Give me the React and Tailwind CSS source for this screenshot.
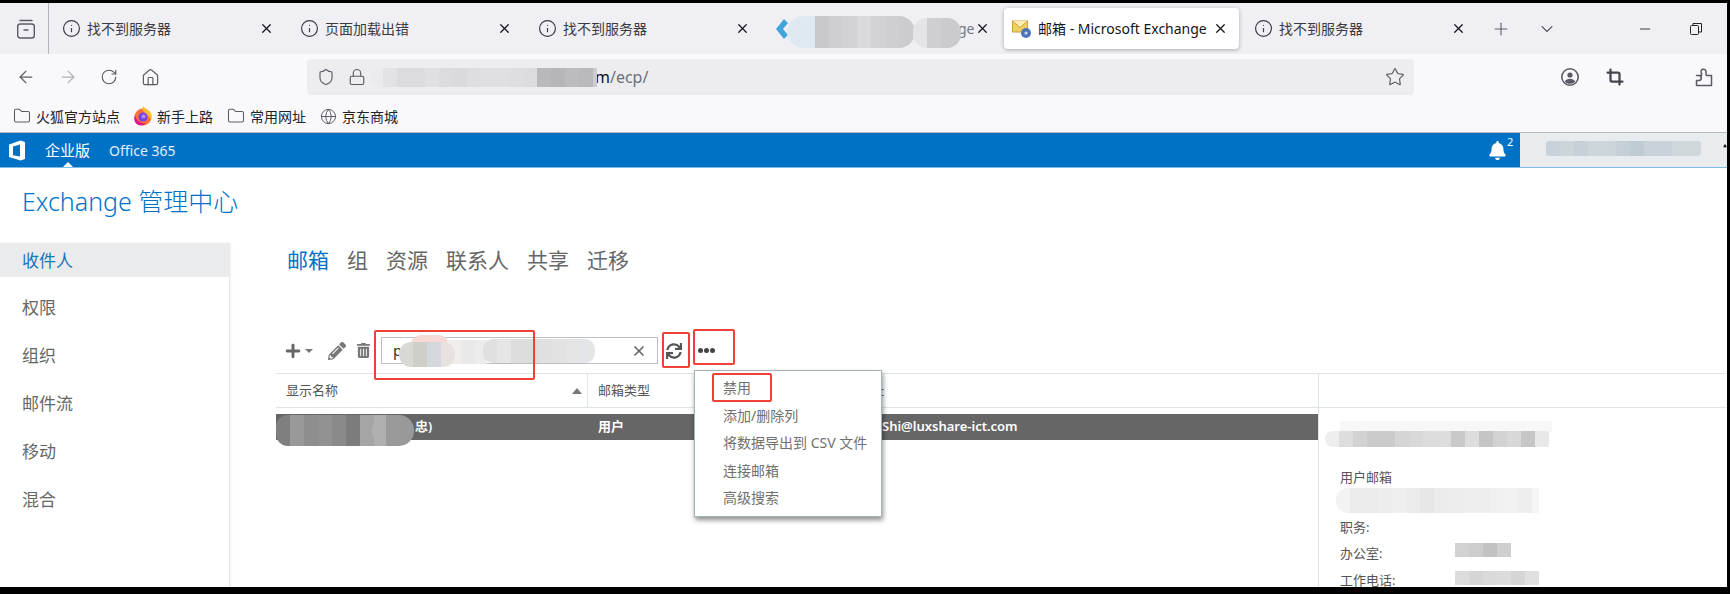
import React from "react";
import {
  ArrowLeft,
  ArrowRight,
  ChevronDown,
  Crop,
  Folder,
  Globe,
  House,
  Info,
  Lock,
  Minus,
  Plus,
  RotateCw,
  Shield,
  Star,
  X,
} from "lucide-react";
import { FaBell, FaPencilAlt, FaSync, FaTrashAlt } from "react-icons/fa";

const sansFont = "font-['Noto_Sans','Noto_Sans_CJK_SC',sans-serif]";

const sideItems = ["权限", "组织", "邮件流", "移动", "混合"];
const navItems = ["组", "资源", "联系人", "共享", "迁移"];
const menuItems = ["禁用", "添加/删除列", "将数据导出到 CSV 文件", "连接邮箱", "高级搜索"];
const bookmarks = [
  { label: "火狐官方站点", icon: "folder" },
  { label: "新手上路", icon: "firefox" },
  { label: "常用网址", icon: "folder" },
  { label: "京东商城", icon: "globe" },
];

const TabsIcon = () => (
  <svg width="20" height="22" viewBox="0 0 20 22" fill="none" stroke="#5b5b66" strokeWidth="1.4">
    <path d="M4 2.5h12" strokeLinecap="round" />
    <rect x="1.7" y="6" width="16.6" height="14" rx="2.5" />
    <path d="M8 12h4" strokeLinecap="round" />
  </svg>
);

const OfficeLogo = () => (
  <svg width="20" height="21" viewBox="0 0 20 21">
    <path d="M1 4.5 12.5 0.5 17 2v17l-4.5 1.5L1 17V4.5Z" fill="#fff" />
    <path d="M5 6.5 12 4.5v12l-7-1.2V6.5Z" fill="#0072c6" />
  </svg>
);

const MailIcon = () => (
  <svg width="20" height="20" viewBox="0 0 20 20">
    <rect x="0.5" y="2" width="15" height="11" fill="#f0cf62" stroke="#c9a23f" />
    <path d="M0.5 2 8 8.5 15.5 2" fill="#fbeeb0" stroke="#c9a23f" />
    <circle cx="14" cy="14" r="5" fill="#5272b8" />
    <circle cx="14" cy="14" r="1.6" fill="#c8d6f0" />
  </svg>
);

const FirefoxIcon = () => (
  <svg width="18" height="20" viewBox="0 0 18 20">
    <circle cx="9" cy="11" r="8.5" fill="#ff7139" />
    <path d="M9 0c2 2.5 6 4 8 8 1 2 .5 4-1 5-1-3-3-5-5-6-2-1.500-2.500-4-2-7Z" fill="#ffbd2e" />
    <path d="M1 9c1 5 5 9 11 8.500-3 3-9 2.500-11-1.500-1-2-1-5 0-7Z" fill="#e31587" />
    <circle cx="9" cy="11" r="4.500" fill="#7542e5" />
    <circle cx="9.500" cy="10.500" r="2" fill="#b98be8" />
  </svg>
);

const ProfileIcon = () => (
  <svg width="20" height="20" viewBox="0 0 20 20" fill="none" stroke="#5b5b66" strokeWidth="1.6">
    <circle cx="10" cy="10" r="8.2" />
    <circle cx="10" cy="8" r="2.6" fill="#5b5b66" stroke="none" />
    <path d="M4.800 14.500c1-2 3-2.800 5.200-2.800s4.200.8 5.200 2.800c-1.300 1.500-3.200 2.300-5.200 2.300s-3.900-.8-5.200-2.300Z" fill="#5b5b66" stroke="none" />
  </svg>
);

const DiamondIcon = () => (
  <svg width="16" height="22" viewBox="0 0 16 22">
    <path d="M9 1 1 11l8 10 4-4-5-6 5-6-4-4Z" fill="#41a5dc" />
  </svg>
);

const ExtensionIcon = () => (
  <svg width="18" height="20" viewBox="0 0 18 20" fill="none" stroke="#5b5b66" strokeWidth="1.5" strokeLinejoin="round">
    <path d="M1.500 8.500h5V6.200a2.500 2.500 0 1 1 4.500-1.400V7l.5 1.500h5v10h-15v-5h2.300a2 2 0 0 0 0-5H1.500Z" />
  </svg>
);

const Tab = ({ title }) => (
  <div className="flex h-full w-[238px] shrink-0 items-center pl-[8px] pr-[18px]">
    <Info className="h-[19px] w-[19px] shrink-0 text-[#3c3c44]" strokeWidth={1.5} />
    <span className="ml-[6px] flex-1 text-[14px] text-[#3a3a42]">{title}</span>
    <X className="h-[15px] w-[15px] text-[#15141a]" strokeWidth={2} />
  </div>
);

// pixelated patches covering redacted parts of the screenshot
const Patch = ({ className, cells }) => (
  <div className={`absolute flex overflow-hidden ${className}`}>
    {cells.map((c, i) => (
      <div key={i} className={`h-full w-[14px] shrink-0 ${c}`} />
    ))}
  </div>
);

const RedBox = ({ className }) => (
  <div className={`absolute rounded-[2px] border-[2px] border-[#ef4136] ${className}`} />
);

export default function App() {
  return (
    <div className={`relative h-[594px] w-[1730px] overflow-hidden bg-black pb-[7px] pr-[3px] pt-[3px] ${sansFont}`}>
      <div className="flex h-full flex-col overflow-hidden bg-white">
        {/* tab strip */}
        <div className="flex h-[51px] shrink-0 items-center bg-[#f0f0f4]">
          <div className="flex h-full w-[49px] shrink-0 items-center justify-center border-r border-[#b5b5bb] pl-[3px]">
            <TabsIcon />
          </div>
          <div className="w-[5px] shrink-0" />
          <Tab title="找不到服务器" />
          <Tab title="页面加载出错" />
          <Tab title="找不到服务器" />
          <div className="flex h-full w-[236px] shrink-0 items-center pl-[7px] pr-[14px]">
            <DiamondIcon />
            <span className="ml-[167px] flex-1 text-[14px] text-[#77777d]">ge</span>
            <X className="h-[15px] w-[15px] text-[#15141a]" strokeWidth={2} />
          </div>
          <div className="flex h-[41px] w-[235px] shrink-0 items-center rounded-[4px] bg-white pl-[8px] pr-[11px] shadow-[0_1px_4px_rgba(0,0,0,0.3)]">
            <MailIcon />
            <span className="ml-[6px] flex-1 overflow-hidden whitespace-nowrap text-[14px] text-[#15141a]">邮箱 - Microsoft Exchange</span>
            <X className="h-[15px] w-[15px] shrink-0 text-[#15141a]" strokeWidth={2} />
          </div>
          <div className="w-[7px] shrink-0" />
          <Tab title="找不到服务器" />
          <Plus className="ml-[7px] h-[20px] w-[20px] text-[#5b5b66]" strokeWidth={1.3} />
          <ChevronDown className="ml-[26px] h-[20px] w-[20px] text-[#5b5b66]" strokeWidth={1.3} />
          <Minus className="ml-[80px] h-[16px] w-[16px] text-[#222]" strokeWidth={1.3} />
          <svg className="ml-[36px]" width="14" height="14" viewBox="0 0 14 14" fill="none" stroke="#222" strokeWidth="1">
            <rect x="1.500" y="3.500" width="8" height="9" rx="1" />
            <path d="M4 3.500V1.500h8.500v8.500H9.500" />
          </svg>
        </div>

        {/* address toolbar */}
        <div className="flex h-[46px] shrink-0 items-center bg-[#f9f9fb] pl-[16px]">
          <ArrowLeft className="h-[20px] w-[20px] text-[#5b5b66]" strokeWidth={1.5} />
          <ArrowRight className="ml-[22px] h-[20px] w-[20px] text-[#b3b3b8]" strokeWidth={1.5} />
          <RotateCw className="ml-[22px] h-[18px] w-[18px] text-[#5b5b66]" strokeWidth={1.5} />
          <House className="ml-[23px] h-[19px] w-[19px] text-[#5b5b66]" strokeWidth={1.5} />
          <div className="ml-[147px] flex h-[36px] w-[1107px] shrink-0 items-center rounded-[4px] bg-[#ededf0] pl-[10px] pr-[9px]">
            <Shield className="h-[18px] w-[18px] text-[#5b5b66]" strokeWidth={1.5} />
            <Lock className="ml-[13px] h-[18px] w-[18px] text-[#5b5b66]" strokeWidth={1.5} />
            <span className="ml-[229px] flex-1 text-[16px] text-[#15141a]">
              m<span className="text-[#6f6f76]">/ecp/</span>
            </span>
            <Star className="h-[20px] w-[20px] text-[#5b5b66]" strokeWidth={1.4} />
          </div>
          <div className="ml-[146px]"><ProfileIcon /></div>
          <Crop className="ml-[26px] h-[18px] w-[18px] text-[#45454d]" strokeWidth={3} />
          <div className="ml-[71px]"><ExtensionIcon /></div>
        </div>

        {/* bookmarks */}
        <div className="flex h-[33px] shrink-0 items-center gap-[14px] border-b border-[#b9b9bd] bg-[#f9f9fb] pl-[13px]">
          {bookmarks.map((b) => (
            <div key={b.label} className="flex items-center gap-[5px]">
              {b.icon === "folder" && <Folder className="h-[18px] w-[18px] text-[#5b5b66]" strokeWidth={1.4} />}
              {b.icon === "firefox" && <FirefoxIcon />}
              {b.icon === "globe" && <Globe className="h-[17px] w-[17px] text-[#5b5b66]" strokeWidth={1.4} />}
              <span className="text-[14px] text-[#222228]">{b.label}</span>
            </div>
          ))}
        </div>

        {/* office bar */}
        <div className="relative flex h-[35px] shrink-0 items-center border-b border-[#7fbce6] bg-[#0072c6] pl-[8px]">
          <OfficeLogo />
          <span className="ml-[17px] text-[15px] text-white">企业版</span>
          <span className="ml-[19px] text-[14px] text-[#e3f0fa]">Office 365</span>
          <div className="absolute bottom-0 left-[63px] h-0 w-0 border-x-[5px] border-b-[5px] border-x-transparent border-b-white" />
          <FaBell className="absolute left-[1488px] top-[8px] h-[19px] w-[19px] text-white" />
          <span className="absolute left-[1507px] top-[1px] text-[11px] text-white">2</span>
          <div className="absolute bottom-0 right-0 top-0 w-[207px] bg-[#e9ecee]" />
        </div>

        {/* app */}
        <div className="h-[75px] shrink-0 pl-[22px] pt-[15px]">
          <div className="text-[25px] font-light leading-[36px] text-[#0072c6]">Exchange 管理中心</div>
        </div>

        <div className="flex min-h-0 flex-1">
          <div className="w-[230px] shrink-0 border-r border-[#eaeaea] shadow-[1px_0_3px_rgba(0,0,0,0.06)]">
            <div className="mb-[7px] flex h-[34px] items-center bg-[#e9ebed] pl-[22px] pt-[1px] text-[17px] text-[#1a74b8]">收件人</div>
            {sideItems.map((item) => (
              <div key={item} className="flex h-[48px] items-center pl-[22px] text-[17px] text-[#666]">
                {item}
              </div>
            ))}
          </div>

          <div className="flex min-w-0 flex-1 flex-col">
            <div className="flex h-[34px] shrink-0 items-center gap-[18px] pl-[57px] pt-[1px] text-[21px] text-[#666]">
              <span className="text-[#0072c6]">邮箱</span>
              {navItems.map((n) => (
                <span key={n}>{n}</span>
              ))}
            </div>

            <div className="mt-[60px] flex h-[27px] shrink-0 items-center pl-[53px]">
              <Plus className="h-[20px] w-[20px] text-[#666]" strokeWidth={3.5} />
              <div className="ml-[2px] h-0 w-0 border-x-[4px] border-t-[4px] border-x-transparent border-t-[#777]" />
              <FaPencilAlt className="ml-[15px] h-[18px] w-[18px] text-[#777]" />
              <FaTrashAlt className="ml-[10px] h-[15px] w-[15px] text-[#777]" />
              <div className="ml-[10px] flex h-[27px] w-[277px] shrink-0 items-center border border-[#b8c0c4] pl-[11px] pr-[10px]">
                <span className="flex-1 text-[15px] text-[#333]">p</span>
                <X className="h-[16px] w-[16px] text-[#666]" strokeWidth={2.5} />
              </div>
              <FaSync className="ml-[8px] h-[16px] w-[16px] text-[#555]" />
              <div className="ml-[16px] flex gap-[1px]">
                <div className="h-[5px] w-[5px] rounded-full bg-[#444]" />
                <div className="h-[5px] w-[5px] rounded-full bg-[#444]" />
                <div className="h-[5px] w-[5px] rounded-full bg-[#444]" />
              </div>
            </div>

            <div className="ml-[46px] mt-[9px] flex min-h-0 flex-1">
              <div className="w-[1043px] shrink-0 border-r border-[#dfe4e7]">
                <div className="flex h-[35px] items-center border-y border-[#dfe4e7] text-[13px] text-[#555]">
                  <div className="flex h-full w-[312px] shrink-0 items-center justify-between border-r border-[#dfe4e7] pl-[10px] pr-[5px]">
                    <span>显示名称</span>
                    <div className="h-0 w-0 border-x-[5px] border-b-[6px] border-x-transparent border-b-[#777]" />
                  </div>
                  <div className="w-[218px] shrink-0 pl-[10px]">邮箱类型</div>
                  <div>电子邮件地址</div>
                </div>
                <div className="mt-[6px] flex h-[26px] items-center bg-[#666] text-[13px] font-semibold text-white">
                  <div className="w-[312px] shrink-0 pl-[139px]">忠)</div>
                  <div className="w-[218px] shrink-0 pl-[10px]">用户</div>
                  <div className="pl-[76px]">Shi@luxshare-ict.com</div>
                </div>
              </div>

              <div className="min-w-0 flex-1">
                <div className="h-[35px] border-y border-[#dfe4e7]" />
                <div className="pl-[21px] text-[13px] text-[#555]">
                  <div className="mt-[60px]">用户邮箱</div>
                  <div className="mt-[30px]">职务:</div>
                  <div className="mt-[7px]">办公室:</div>
                  <div className="mt-[7px]">工作电话:</div>
                </div>
              </div>
            </div>
          </div>
        </div>
      </div>

      {/* right side of office bar, blurred account */}
      <Patch
        className="left-[1546px] top-[141px] h-[15px] w-[155px] rounded-[3px]"
        cells={["bg-[#c8d2d8]", "bg-[#ccd5da]", "bg-[#c6d0d6]", "bg-[#cdd6db]", "bg-[#ccd5da]", "bg-[#c5d0d6]", "bg-[#bfccd3]", "bg-[#c8d2d8]", "bg-[#c8d2d8]", "bg-[#d0d8dc]", "bg-[#d0d8dc]", "bg-[#d0d8dc]"]}
      />
      <FaBell className="absolute left-[1723px] top-[144px] h-[4px] w-[4px] text-[#222]" />

      {/* blurred address */}
      <Patch
        className="left-[369px] top-[68px] h-[19px] w-[228px] rounded-l-[10px]"
        cells={["bg-[#ebebee]", "bg-[#e3e3e6]", "bg-[#dcdcdf]", "bg-[#dcdcdf]", "bg-[#e0e0e3]", "bg-[#dcdcdf]", "bg-[#dadadd]", "bg-[#dedee1]", "bg-[#e0e0e3]", "bg-[#e0e0e3]", "bg-[#dedee1]", "bg-[#dcdcdf]", "bg-[#b9b9bc]", "bg-[#b6b6b9]", "bg-[#bcbcbf]", "bg-[#b9b9bc]", "bg-[#cdcdd0]", "bg-[#cfcfd2]"]}
      />

      {/* blurred tab title */}
      <Patch
        className="left-[787px] top-[16px] h-[32px] w-[128px] rounded-[16px]"
        cells={["bg-[#dfe9f2]", "bg-[#dfe9f2]", "bg-[#c9c8cd]", "bg-[#cfced3]", "bg-[#d2d1d6]", "bg-[#d9d8dd]", "bg-[#d2d1d6]", "bg-[#cfced3]", "bg-[#cccbd0]", "bg-[#cfced3]"]}
      />
      <Patch
        className="left-[913px] top-[18px] h-[30px] w-[48px] rounded-[14px]"
        cells={["bg-[#e3e3e8]", "bg-[#cfced3]", "bg-[#cbcacf]", "bg-[#cbcacf]"]}
      />

      {/* blurred search text */}
      <div className="absolute left-[410px] top-[335px] h-[14px] w-[40px] rounded-t-[12px] bg-[#f6d9d4]" />
      <Patch
        className="left-[447px] top-[340px] h-[24px] w-[40px]"
        cells={["bg-[#f0eeec]", "bg-[#e9e9ea]", "bg-[#ececec]"]}
      />
      <Patch
        className="left-[399px] top-[342px] h-[25px] w-[56px] rounded-[12px]"
        cells={["bg-[#d8d8d4]", "bg-[#cfcfca]", "bg-[#d4d8dc]", "bg-[#e7e2df]"]}
      />
      <Patch
        className="left-[483px] top-[339px] h-[24px] w-[112px] rounded-[10px]"
        cells={["bg-[#e0e0e0]", "bg-[#e6e6e6]", "bg-[#dcdcdc]", "bg-[#dddddd]", "bg-[#e0e0e0]", "bg-[#e2e2e2]", "bg-[#e5e5e5]", "bg-[#e3e5e8]"]}
      />

      {/* blurred display name */}
      <Patch
        className="left-[276px] top-[415px] h-[31px] w-[124px] rounded-[12px]"
        cells={["bg-[#7f7f7f]", "bg-[#999]", "bg-[#8e8e8e]", "bg-[#929292]", "bg-[#8a8a8a]", "bg-[#7c7c7c]", "bg-[#a5a5a5]", "bg-[#b0b0b0]", "bg-[#b5b5b5]"]}
      />
      <Patch
        className="left-[372px] top-[415px] h-[31px] w-[42px] rounded-[15px]"
        cells={["bg-[#b0b0b0]", "bg-[#9a9a9a]", "bg-[#999]"]}
      />

      {/* blurred details */}
      <div className="absolute left-[1340px] top-[421px] h-[11px] w-[212px] bg-[#f7f7f7]" />
      <Patch
        className="left-[1325px] top-[431px] h-[16px] w-[228px] rounded-l-[8px]"
        cells={["bg-[#eeeeee]", "bg-[#dddddd]", "bg-[#d2d2d2]", "bg-[#cbcbcb]", "bg-[#cbcbcb]", "bg-[#d5d5d5]", "bg-[#d8d8d8]", "bg-[#dcdcdc]", "bg-[#dddddd]", "bg-[#c9c9c9]", "bg-[#dddddd]", "bg-[#c5c5c5]", "bg-[#d2d2d2]", "bg-[#d8d8d8]", "bg-[#c6c6c6]", "bg-[#e8e8e8]"]}
      />
      <Patch
        className="left-[1336px] top-[488px] h-[25px] w-[203px] rounded-l-[12px]"
        cells={["bg-[#f2f2f2]", "bg-[#ebebeb]", "bg-[#ebebeb]", "bg-[#ededed]", "bg-[#efefef]", "bg-[#ebebeb]", "bg-[#e7e7e7]", "bg-[#ececec]", "bg-[#ededed]", "bg-[#eeeeee]", "bg-[#eeeeee]", "bg-[#f0f0f0]", "bg-[#f2f2f2]", "bg-[#eeeeee]", "bg-[#f5f5f5]"]}
      />
      <Patch className="left-[1455px] top-[543px] h-[14px] w-[56px]" cells={["bg-[#d2d2d2]", "bg-[#cdcdcd]", "bg-[#c2c2c2]", "bg-[#cfcfcf]"]} />
      <Patch className="left-[1455px] top-[571px] h-[14px] w-[84px]" cells={["bg-[#dcdcdc]", "bg-[#d5d5d5]", "bg-[#dadada]", "bg-[#dcdcdc]", "bg-[#d5d5d5]", "bg-[#e0e0e0]"]} />

      {/* popup menu */}
      <div className="absolute left-[694px] top-[370px] h-[147px] w-[188px] border border-[#a9b4b8] bg-white pl-[28px] pt-[3px] text-[14px] text-[#707070] shadow-[1px_3px_5px_rgba(0,0,0,0.45)]">
        {menuItems.map((m) => (
          <div key={m} className="flex h-[27.5px] items-center whitespace-nowrap">
            {m}
          </div>
        ))}
      </div>

      {/* red annotations */}
      <RedBox className="left-[374px] top-[330px] h-[50px] w-[161px]" />
      <RedBox className="left-[662px] top-[332px] h-[36px] w-[28px]" />
      <RedBox className="left-[693px] top-[329px] h-[36px] w-[42px]" />
      <RedBox className="left-[712px] top-[373px] h-[29px] w-[60px]" />
    </div>
  );
}
